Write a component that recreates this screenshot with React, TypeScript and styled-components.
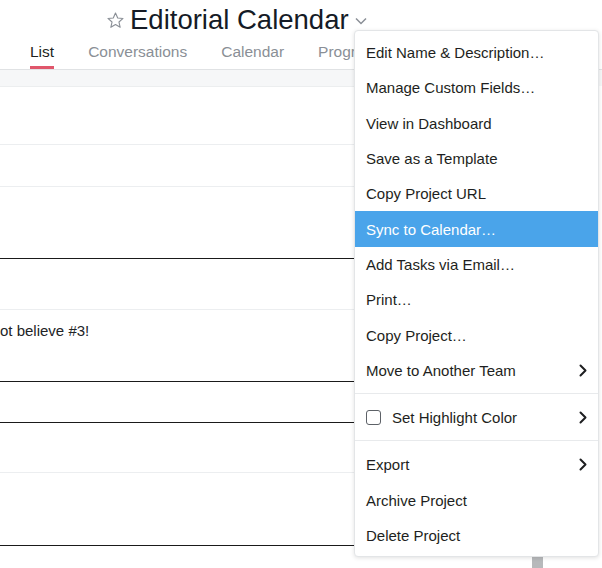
import styled, { createGlobalStyle } from "styled-components";

const GlobalStyle = createGlobalStyle`
  html, body {
    margin: 0;
    padding: 0;
    background: #ffffff;
  }
  body {
    font-family: "Liberation Sans", Arial, sans-serif;
    color: #1e1f21;
    overflow: hidden;
  }
`;

const Page = styled.div`
  position: relative;
  width: 602px;
  height: 568px;
  overflow: hidden;
  background: #ffffff;
`;

const Header = styled.header`
  border-bottom: 1px solid #e0e2e4;
  background: #ffffff;
`;

const TitleRow = styled.div`
  display: flex;
  align-items: center;
  padding: 4px 0 0 106px;
  height: 32px;
`;

const Title = styled.h1`
  margin: 0 0 0 5px;
  font-size: 27.5px;
  line-height: 32px;
  font-weight: 400;
  color: #151b26;
  white-space: nowrap;
`;

const Tabs = styled.nav`
  display: flex;
  gap: 34px;
  padding: 7px 0 0 30px;
  white-space: nowrap;
`;

const Tab = styled.div<{ $active?: boolean }>`
  font-size: 15.5px;
  line-height: 18px;
  padding-bottom: 5px;
  border-bottom: 3px solid ${(p) => (p.$active ? "#e0566b" : "transparent")};
  color: ${(p) => (p.$active ? "#1e1f21" : "#8a8f96")};
`;

const Band = styled.div`
  height: 16px;
  background: #f6f7f8;
`;

const Body = styled.div`
  display: flex;
`;

const List = styled.div`
  width: 532px;
  border-top: 1px solid #eceeef;
`;

const Row = styled.div<{ $h: number; $dark?: boolean }>`
  box-sizing: border-box;
  height: ${(p) => p.$h}px;
  border-bottom: ${(p) => (p.$dark ? "1.5px solid #1a1a1a" : "1.5px solid #eceef0")};
  display: flex;
  align-items: flex-start;
  padding-top: 12px;
`;

const RowText = styled.span`
  font-size: 15px;
  line-height: 18px;
  color: #222426;
  white-space: nowrap;
`;

const Track = styled.div`
  width: 11px;
  display: flex;
  flex-direction: column;
  justify-content: flex-end;
  height: 482px;
`;

const Thumb = styled.div`
  height: 12px;
  background: #b7b9bb;
`;

const Menu = styled.div`
  position: absolute;
  left: 354px;
  top: 30px;
  width: 243px;
  background: #ffffff;
  border: 1px solid #e3e5e7;
  border-radius: 4px;
  box-shadow: 0 1px 4px rgba(0, 0, 0, 0.12);
`;

const Section = styled.div<{ $pt: number; $pb: number }>`
  padding: ${(p) => p.$pt}px 0 ${(p) => p.$pb}px;
  & + & {
    border-top: 1px solid #e8eaec;
  }
`;

const Item = styled.div<{ $active?: boolean }>`
  display: flex;
  align-items: center;
  height: 35.3px;
  padding: 0 11px;
  font-size: 15px;
  white-space: nowrap;
  background: ${(p) => (p.$active ? "#4aa4ea" : "transparent")};
  color: ${(p) => (p.$active ? "#ffffff" : "#1e1f21")};
`;

const Label = styled.span`
  flex: 1;
`;

const Check = styled.span`
  width: 13px;
  height: 13px;
  border: 1.5px solid #5d6167;
  border-radius: 3px;
  margin-right: 11px;
  flex: none;
`;

const Chevron = () => (
  <svg width="8" height="13" viewBox="0 0 8 13">
    <polyline points="1.5,1.5 6.5,6.5 1.5,11.5" fill="none" stroke="#1e1f21" strokeWidth="2" strokeLinejoin="round" strokeLinecap="round" />
  </svg>
);

const Star = () => (
  <svg width="19" height="19" viewBox="0 0 24 24">
    <polygon
      points="12,2.5 14.8,8.8 21.5,9.4 16.4,13.9 17.9,20.6 12,17.1 6.1,20.6 7.6,13.9 2.5,9.4 9.2,8.8"
      fill="none"
      stroke="#8a8f96"
      strokeWidth="1.4"
      strokeLinejoin="round"
    />
  </svg>
);

const Caret = () => (
  <svg width="12" height="8" viewBox="0 0 12 8" style={{ marginLeft: 6, marginTop: 2 }}>
    <polyline points="1,1.5 6,6.5 11,1.5" fill="none" stroke="#8a8f96" strokeWidth="1.5" />
  </svg>
);

const rows = [
  { h: 58 },
  { h: 42 },
  { h: 72, dark: true },
  { h: 51 },
  { h: 72, dark: true, text: "ot believe #3!" },
  { h: 41, dark: true },
  { h: 50 },
  { h: 73, dark: true },
  { h: 40 },
];

type MenuEntry = { label: string; active?: boolean; sub?: boolean; check?: boolean };

const sections: { pt: number; pb: number; items: MenuEntry[] }[] = [
  {
    pt: 4,
    pb: 5,
    items: [
      { label: "Edit Name & Description…" },
      { label: "Manage Custom Fields…" },
      { label: "View in Dashboard" },
      { label: "Save as a Template" },
      { label: "Copy Project URL" },
      { label: "Sync to Calendar…", active: true },
      { label: "Add Tasks via Email…" },
      { label: "Print…" },
      { label: "Copy Project…" },
      { label: "Move to Another Team", sub: true },
    ],
  },
  { pt: 6, pb: 5, items: [{ label: "Set Highlight Color", check: true, sub: true }] },
  {
    pt: 6,
    pb: 3,
    items: [{ label: "Export", sub: true }, { label: "Archive Project" }, { label: "Delete Project" }],
  },
];

export default function App() {
  return (
    <>
      <GlobalStyle />
      <Page>
        <Header>
          <TitleRow>
            <Star />
            <Title>Editorial Calendar</Title>
            <Caret />
          </TitleRow>
          <Tabs>
            <Tab $active>List</Tab>
            <Tab>Conversations</Tab>
            <Tab>Calendar</Tab>
            <Tab>Progress</Tab>
          </Tabs>
        </Header>
        <Band />
        <Body>
          <List>
            {rows.map((r, i) => (
              <Row key={i} $h={r.h} $dark={r.dark}>
                {r.text && <RowText>{r.text}</RowText>}
              </Row>
            ))}
          </List>
          <Track>
            <Thumb />
          </Track>
        </Body>

        <Menu>
          {sections.map((s, i) => (
            <Section key={i} $pt={s.pt} $pb={s.pb}>
              {s.items.map((it) => (
                <Item key={it.label} $active={it.active}>
                  {it.check && <Check />}
                  <Label>{it.label}</Label>
                  {it.sub && <Chevron />}
                </Item>
              ))}
            </Section>
          ))}
        </Menu>
      </Page>
    </>
  );
}
